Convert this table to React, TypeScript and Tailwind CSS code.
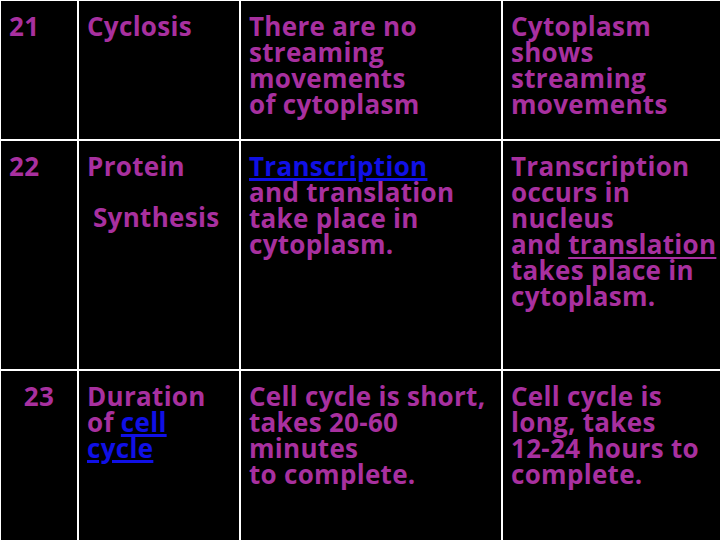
const textStyle = "font-['Open_Sans',sans-serif] font-bold text-[26px] leading-[26px] tracking-[0.3px] text-[#a8309f] whitespace-nowrap [font-variant-ligatures:none]"

function Link({ children }: { children: React.ReactNode }) {
  return <span className="text-[#1010e6] underline decoration-[3px] underline-offset-[2px]">{children}</span>
}

function Cell({ children, className = "" }: { children: React.ReactNode; className?: string }) {
  return <div className={`bg-black pt-[12px] ${textStyle} ${className}`}>{children}</div>
}

export default function App() {
  return (
    <div className="w-[720px] h-[540px] overflow-hidden bg-black">
      <div className="grid grid-cols-[76px_160px_260px_1fr] grid-rows-[138px_228px_200px] gap-[2px] bg-white pl-[1px] pt-[1px]">
        {/* row 21 */}
        <Cell className="pl-[8px]">21</Cell>
        <Cell className="pl-[8px]">Cyclosis</Cell>
        <Cell className="pl-[8px]">
          There are no<br />streaming<br />movements<br />of cytoplasm
        </Cell>
        <Cell className="pl-[8px]">
          Cytoplasm<br />shows<br />streaming<br />movements
        </Cell>

        {/* row 22 */}
        <Cell className="pl-[8px]">22</Cell>
        <Cell className="pl-[8px]">
          <div>Protein</div>
          <div className="mt-[25px] pl-[6px]">Synthesis</div>
        </Cell>
        <Cell className="pl-[8px]">
          <Link>Transcription</Link><br />and translation<br />take place in<br />cytoplasm.
        </Cell>
        <Cell className="pl-[8px]">
          Transcription<br />occurs in<br />nucleus<br />and <span className="underline decoration-2 underline-offset-[3px]">translation</span><br />takes place in<br />cytoplasm.
        </Cell>

        {/* row 23 */}
        <Cell className="text-center">23</Cell>
        <Cell className="pl-[8px]">
          Duration<br />of <Link>cell</Link><br /><Link>cycle</Link>
        </Cell>
        <Cell className="pl-[8px]">
          Cell cycle is short,<br />takes 20-60<br />minutes<br />to complete.
        </Cell>
        <Cell className="pl-[8px]">
          Cell cycle is<br />long, takes<br />12-24 hours to<br />complete.
        </Cell>
      </div>
    </div>
  )
}
